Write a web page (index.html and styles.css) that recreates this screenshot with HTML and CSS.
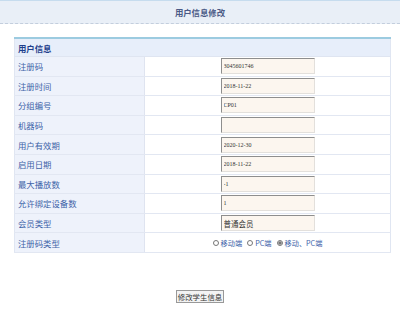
FILE: index.html
```html
<!DOCTYPE html>
<html lang="zh-CN">
<head>
  <meta charset="UTF-8">
  <meta name="viewport" content="width=device-width, initial-scale=1.0">
  <title>用户信息修改</title>
  <link rel="stylesheet" href="styles.css">
</head>
<body>

  <div class="title-bar">用户信息修改</div>

  <form id="userForm" class="user-form">
    <table class="info-table">
      <thead>
        <tr>
          <th colspan="2">用户信息</th>
        </tr>
      </thead>
      <tbody>
        <tr>
          <td class="label">注册码</td>
          <td class="value"><input type="text" class="field" value="3045601746"></td>
        </tr>
        <tr>
          <td class="label">注册时间</td>
          <td class="value"><input type="text" class="field" value="2018-11-22"></td>
        </tr>
        <tr>
          <td class="label">分组编号</td>
          <td class="value"><input type="text" class="field" value="CP01"></td>
        </tr>
        <tr>
          <td class="label">机器码</td>
          <td class="value"><input type="text" class="field" value=""></td>
        </tr>
        <tr>
          <td class="label">用户有效期</td>
          <td class="value"><input type="text" class="field" value="2020-12-30"></td>
        </tr>
        <tr>
          <td class="label">启用日期</td>
          <td class="value"><input type="text" class="field" value="2018-11-22"></td>
        </tr>
        <tr>
          <td class="label">最大播放数</td>
          <td class="value"><input type="text" class="field" value="-1"></td>
        </tr>
        <tr>
          <td class="label">允许绑定设备数</td>
          <td class="value"><input type="text" class="field" value="1"></td>
        </tr>
        <tr>
          <td class="label">会员类型</td>
          <td class="value"><input type="text" class="field cn" value="普通会员"></td>
        </tr>
        <tr>
          <td class="label">注册码类型</td>
          <td class="value">
            <div class="radios">
              <label class="radio"><input type="radio" name="regType" value="1"><span>移动端</span></label>
              <label class="radio"><input type="radio" name="regType" value="2"><span>PC端</span></label>
              <label class="radio"><input type="radio" name="regType" value="3" checked><span>移动、PC端</span></label>
            </div>
          </td>
        </tr>
      </tbody>
    </table>

    <div class="actions">
      <input type="button" class="btn" value="修改学生信息">
    </div>
  </form>

</body>
</html>
```

FILE: styles.css
```css
body {
  margin: 0;
  font-family: "Noto Sans CJK SC", "Liberation Sans", sans-serif;
  background-color: #fff;
}

.title-bar {
  height: 22px;
  line-height: 22px;
  border-top: 1px solid #c6dcee;
  border-bottom: 1px dashed #c3cedd;
  background-color: #e9eff7;
  text-align: center;
  font-size: 8.4px;
  font-weight: bold;
  color: #4b5a86;
}

.user-form {
  margin-top: 13px;
}

.info-table {
  width: 377px;
  margin-left: 14px;
  border-collapse: collapse;
  border-top: 2px solid #9ccbe0;
  border-left: 1px solid #e0e6f2;
  border-right: 1px solid #e0e6f2;
  line-height: 12px;
}

.info-table th {
  height: 17px;
  padding: 0 0 0 3px;
  text-align: left;
  font-size: 8.4px;
  font-weight: bold;
  color: #1f3f8c;
  background-color: #e7eefa;
  border-bottom: 1px solid #dfe5f1;
}

.info-table td {
  height: 18.6px;
  padding: 0;
  border-bottom: 1px solid #e2e7f2;
}

.label {
  width: 126px;
  padding-left: 3px !important;
  font-size: 8.4px;
  color: #3d62a8;
  background-color: #eef2fb;
  border-right: 1px solid #dfe4f0;
}

.value {
  text-align: center;
  background-color: #fff;
}

.field {
  display: block;
  width: 94px;
  height: 16px;
  margin: 0 auto;
  padding: 0 2px;
  box-sizing: border-box;
  border: 1px solid #e3e0dc;
  border-top-color: #8e8e8e;
  border-left-color: #8e8e8e;
  background-color: #fcf6ef;
  font-family: "Liberation Serif", serif;
  font-size: 6px;
  color: #333;
  outline: none;
}

.field.cn {
  font-family: "Noto Sans CJK SC", sans-serif;
  font-size: 7.5px;
}

.radios {
  display: flex;
  justify-content: center;
  align-items: center;
  gap: 5px;
  height: 18px;
}

.radio {
  display: flex;
  align-items: center;
  font-size: 7.2px;
  line-height: 10px;
  color: #3d62a8;
}

.radio input {
  width: 6px;
  height: 6px;
  margin: 0 2px 0 0;
  accent-color: #777;
}

.actions {
  display: flex;
  justify-content: center;
  margin-top: 37px;
}

.btn {
  width: 48px;
  height: 13px;
  padding: 0;
  font-family: "Noto Sans CJK SC", sans-serif;
  font-size: 7.4px;
  line-height: 11px;
  color: #333;
  background-color: #f3f3f3;
  border: 1px solid #999;
  border-radius: 0;
  cursor: pointer;
}

.btn:hover {
  background-color: #e6e6e6;
}
```
